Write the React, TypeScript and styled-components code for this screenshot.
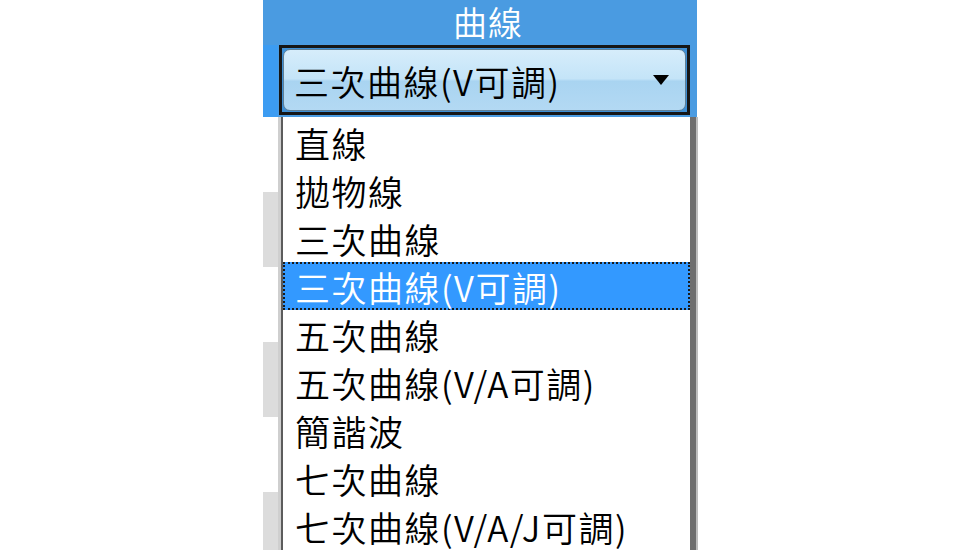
import styled, { createGlobalStyle } from 'styled-components'

const options = [
  '直線',
  '拋物線',
  '三次曲線',
  '三次曲線(V可調)',
  '五次曲線',
  '五次曲線(V/A可調)',
  '簡諧波',
  '七次曲線',
  '七次曲線(V/A/J可調)',
]

const selected = 3
const rows = [0, 1, 2, 3, 4, 5]

const GlobalStyle = createGlobalStyle`
  html, body {
    margin: 0;
    padding: 0;
    background: #ffffff;
    overflow: hidden;
  }
  body {
    font-family: "Noto Sans CJK TC", "Noto Sans", sans-serif;
    font-weight: 350;
  }
`

export default function App() {
  return (
    <>
      <GlobalStyle />
      <Page>
        <Sheet>
          <HeaderCell>曲線</HeaderCell>
          <EditRow>
            <Combo>
              <ComboFace>
                <ComboText>{options[selected]}</ComboText>
                <Arrow viewBox="0 0 16 10">
                  <path d="M0 0 L16 0 L8 10 Z" fill="#000" />
                </Arrow>
              </ComboFace>
            </Combo>
          </EditRow>
          {rows.map((r) => (
            <Row key={r} shaded={r % 2 === 1} />
          ))}
          <List>
            {options.map((o, i) => (
              <Item key={o} active={i === selected}>
                {o}
              </Item>
            ))}
          </List>
        </Sheet>
      </Page>
    </>
  )
}

// Styles
const Page = styled.div`
  width: 960px;
  height: 550px;
  overflow: hidden;
  display: flex;
  background: #ffffff;
`

const Sheet = styled.div`
  position: relative;
  margin-left: 263px;
  width: 434px;
  display: flex;
  flex-direction: column;
`

const HeaderCell = styled.div`
  height: 45px;
  flex: none;
  display: flex;
  align-items: center;
  justify-content: center;
  background: #4a9be1;
  color: #ffffff;
  font-size: 34px;
  line-height: 1.2;
  letter-spacing: 1px;
  padding-left: 16px;
  box-sizing: border-box;
`

const EditRow = styled.div`
  height: 72px;
  flex: none;
  display: flex;
  align-items: flex-start;
  padding-left: 16px;
  background: linear-gradient(to right, #3c9cf2 0, #3c9cf2 15px, #4a9be1 15px);
`

const Combo = styled.div`
  width: 411px;
  height: 70px;
  box-sizing: border-box;
  border: 3px solid #161616;
  background: #3d8fd6;
  padding: 1px;
`

const ComboFace = styled.div`
  height: 100%;
  box-sizing: border-box;
  border: 1px solid #5f7f96;
  border-radius: 7px;
  display: flex;
  align-items: center;
  justify-content: space-between;
  padding: 0 16px 0 10px;
  background: linear-gradient(
    to bottom,
    #d6edfb 0%,
    #c4e4f8 48%,
    #a9d4f1 52%,
    #b3d9f3 100%
  );
`

const ComboText = styled.span`
  font-size: 35px;
  letter-spacing: 1.5px;
  color: #000000;
  line-height: 1;
`

const Arrow = styled.svg`
  width: 16px;
  height: 10px;
`

const Row = styled.div<{ shaded: boolean }>`
  height: 75px;
  flex: none;
  background: ${(p) => (p.shaded ? '#dcdcdc' : '#ffffff')};
`

const List = styled.div`
  position: absolute;
  top: 117px;
  left: 18px;
  width: 415px;
  height: 460px;
  box-sizing: border-box;
  background: #ffffff;
  border-left: 2px solid #5c5c5c;
  border-right: 6px solid #6e6e6e;
  box-shadow: -3px 0 0 #cfcfcf, 2px 0 0 #bdbdbd;
  padding-top: 1px;
`

const Item = styled.div<{ active: boolean }>`
  height: 48px;
  box-sizing: border-box;
  display: flex;
  align-items: center;
  padding-left: 10px;
  font-size: 35px;
  letter-spacing: 1.5px;
  white-space: nowrap;
  color: ${(p) => (p.active ? '#ffffff' : '#000000')};
  background: ${(p) => (p.active ? '#3399ff' : 'transparent')};
  border: 2px dotted ${(p) => (p.active ? '#1a1a1a' : 'transparent')};
`
